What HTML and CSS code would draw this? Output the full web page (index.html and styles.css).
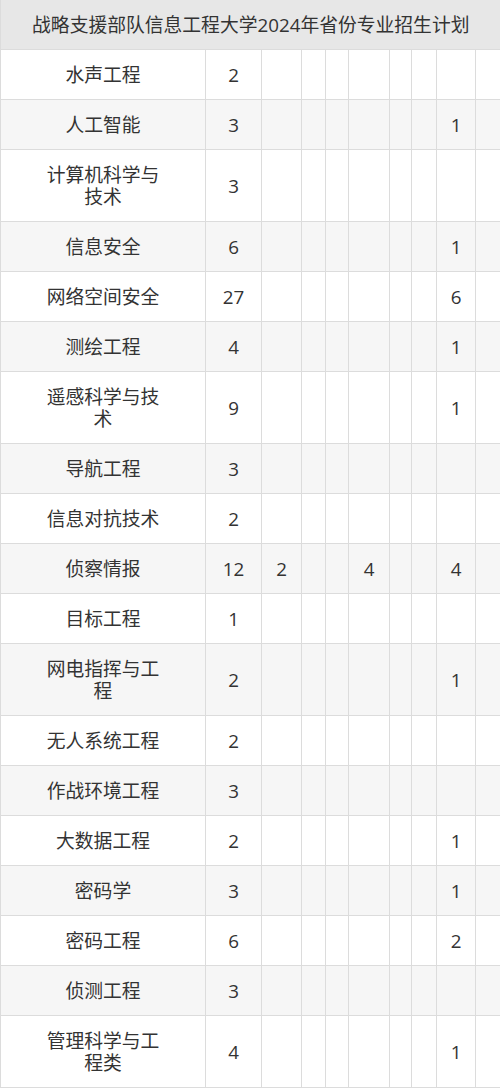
FILE: index.html
```html
<!DOCTYPE html>
<html lang="zh-CN">
<head>
<meta charset="utf-8">
<title>战略支援部队信息工程大学2024年省份专业招生计划</title>
<link rel="stylesheet" href="styles.css">
</head>
<body>
<table class="plan">
  <colgroup>
    <col class="c-name"><col class="c1"><col class="c2"><col class="c3"><col class="c4"><col class="c5"><col class="c6"><col class="c7"><col class="c8"><col class="c9">
  </colgroup>
  <thead>
    <tr><th colspan="10" class="title">战略支援部队信息工程大学2024年省份专业招生计划</th></tr>
  </thead>
  <tbody>
    <tr><td class="name">水声工程</td><td>2</td><td></td><td></td><td></td><td></td><td></td><td></td><td></td><td></td></tr>
    <tr><td class="name">人工智能</td><td>3</td><td></td><td></td><td></td><td></td><td></td><td></td><td>1</td><td></td></tr>
    <tr><td class="name">计算机科学与技术</td><td>3</td><td></td><td></td><td></td><td></td><td></td><td></td><td></td><td></td></tr>
    <tr><td class="name">信息安全</td><td>6</td><td></td><td></td><td></td><td></td><td></td><td></td><td>1</td><td></td></tr>
    <tr><td class="name">网络空间安全</td><td>27</td><td></td><td></td><td></td><td></td><td></td><td></td><td>6</td><td></td></tr>
    <tr><td class="name">测绘工程</td><td>4</td><td></td><td></td><td></td><td></td><td></td><td></td><td>1</td><td></td></tr>
    <tr><td class="name">遥感科学与技术</td><td>9</td><td></td><td></td><td></td><td></td><td></td><td></td><td>1</td><td></td></tr>
    <tr><td class="name">导航工程</td><td>3</td><td></td><td></td><td></td><td></td><td></td><td></td><td></td><td></td></tr>
    <tr><td class="name">信息对抗技术</td><td>2</td><td></td><td></td><td></td><td></td><td></td><td></td><td></td><td></td></tr>
    <tr><td class="name">侦察情报</td><td>12</td><td>2</td><td></td><td></td><td>4</td><td></td><td></td><td>4</td><td></td></tr>
    <tr><td class="name">目标工程</td><td>1</td><td></td><td></td><td></td><td></td><td></td><td></td><td></td><td></td></tr>
    <tr><td class="name">网电指挥与工程</td><td>2</td><td></td><td></td><td></td><td></td><td></td><td></td><td>1</td><td></td></tr>
    <tr><td class="name">无人系统工程</td><td>2</td><td></td><td></td><td></td><td></td><td></td><td></td><td></td><td></td></tr>
    <tr><td class="name">作战环境工程</td><td>3</td><td></td><td></td><td></td><td></td><td></td><td></td><td></td><td></td></tr>
    <tr><td class="name">大数据工程</td><td>2</td><td></td><td></td><td></td><td></td><td></td><td></td><td>1</td><td></td></tr>
    <tr><td class="name">密码学</td><td>3</td><td></td><td></td><td></td><td></td><td></td><td></td><td>1</td><td></td></tr>
    <tr><td class="name">密码工程</td><td>6</td><td></td><td></td><td></td><td></td><td></td><td></td><td>2</td><td></td></tr>
    <tr><td class="name">侦测工程</td><td>3</td><td></td><td></td><td></td><td></td><td></td><td></td><td></td><td></td></tr>
    <tr><td class="name">管理科学与工程类</td><td>4</td><td></td><td></td><td></td><td></td><td></td><td></td><td>1</td><td></td></tr>
  </tbody>
</table>
</body>
</html>
```

FILE: styles.css
```css
html, body {
  margin: 0;
  padding: 0;
  background: #ffffff;
}

body {
  font-family: "Open Sans", "Noto Sans CJK SC", sans-serif;
  color: #333333;
  font-size: 18.8px;
}

.plan {
  width: 500px;
  border-collapse: collapse;
  table-layout: fixed;
}

.c-name { width: 205px; }
.c1 { width: 56px; }
.c2 { width: 40px; }
.c3 { width: 24px; }
.c4 { width: 23px; }
.c5 { width: 41px; }
.c6 { width: 22px; }
.c7 { width: 25px; }
.c8 { width: 39px; }
.c9 { width: 25px; }

.plan th,
.plan td {
  border: 1px solid #dcdcdc;
  text-align: center;
  vertical-align: middle;
  font-weight: 400;
  line-height: 22px;
  padding: 13.5px 0;
}

.plan .title {
  background: #e7e7e7;
  white-space: nowrap;
  border-top: none;
  padding: 14px 0 13px;
}

.plan td.name {
  padding: 13.5px 40px;
}

.plan tbody tr:nth-child(even) td {
  background: #f6f6f6;
}

.plan tr > :last-child {
  border-right: none;
}
```
